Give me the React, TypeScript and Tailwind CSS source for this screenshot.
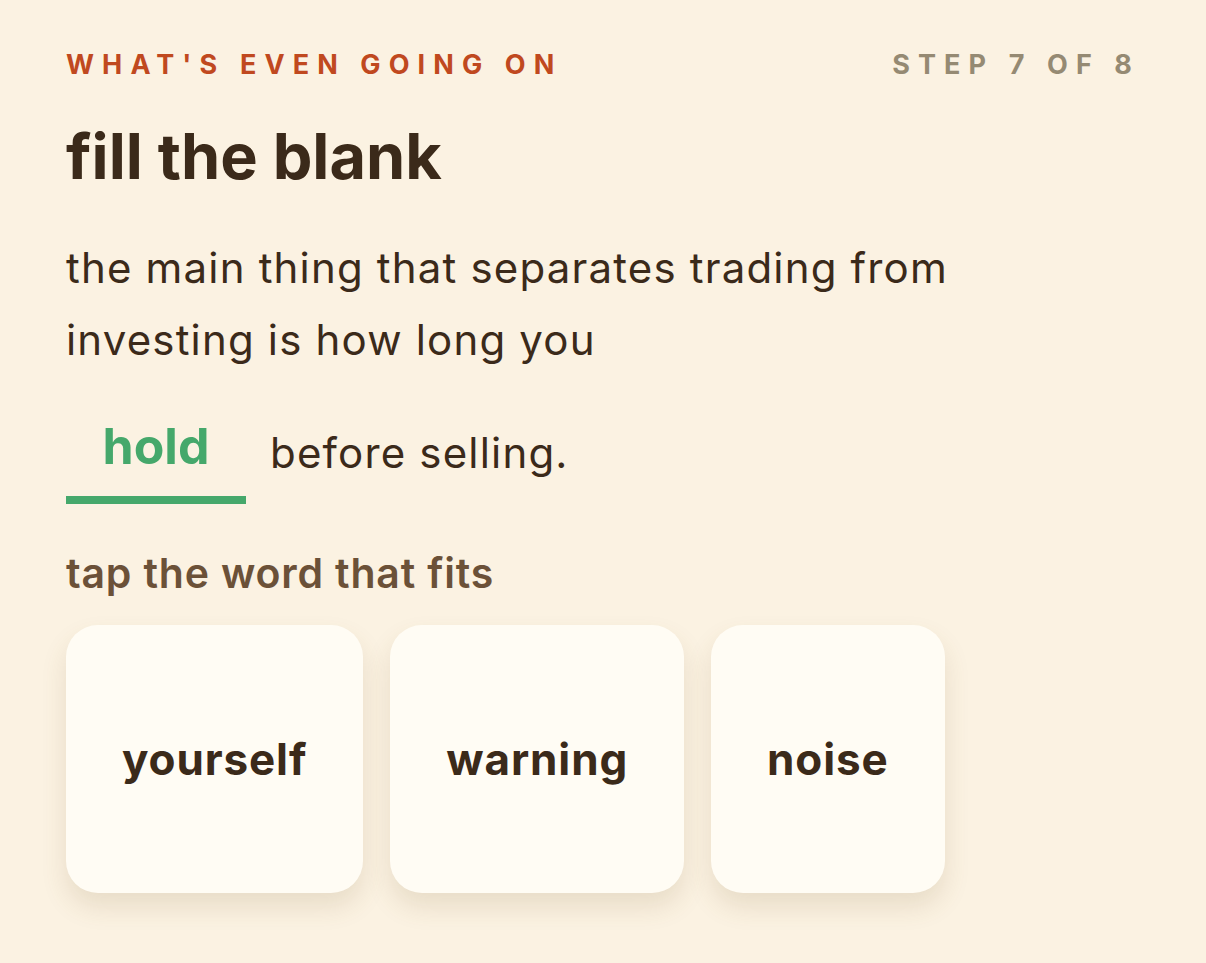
import React from "react";

export default function App() {
  const words = ["yourself", "warning", "noise"];
  return (
    <div
      className="min-h-[963px] w-full bg-[#fbf2e2] text-[#3b2a1a]"
      style={{ fontFamily: "Inter, 'Noto Sans', sans-serif" }}
    >
      <div className="px-[66px] pt-[48px]">
        <div className="flex items-center justify-between">
          <div className="text-[27px] font-bold tracking-[0.3em] text-[#c0491f] leading-[34px]">
            WHAT'S EVEN GOING ON
          </div>
          <div className="text-[27px] font-bold tracking-[0.3em] text-[#958a73] leading-[34px]">
            STEP 7 OF 8
          </div>
        </div>
        <h1 className="mt-[38px] text-[63px] font-bold leading-[72px] text-[#3b2a1a]">
          fill the blank
        </h1>
        <p className="mt-[40px] w-[950px] text-[42px] tracking-[0.028em] leading-[72px] text-[#3b2a1a]">
          the main thing that separates trading from investing is how long you
        </p>
        <div className="mt-[42px] flex items-start">
          <div className="flex w-[180px] flex-col items-center">
            <span className="text-[50px] font-bold leading-[56px] text-[#45a86b]">hold</span>
            <div className="mt-[22px] h-[8px] w-full bg-[#45a86b]" />
          </div>
          <span className="ml-[24px] mt-[10px] text-[42px] tracking-[0.028em] leading-[50px] text-[#3b2a1a]">
            before selling.
          </span>
        </div>
        <div className="mt-[45px] text-[41px] font-semibold tracking-[0.02em] leading-[48px] text-[#6b5138]">
          tap the word that fits
        </div>
        <div className="mt-[28px] flex gap-[27px]">
          {words.map((w) => (
            <button
              key={w}
              className="flex h-[268px] items-center justify-center rounded-[32px] bg-[#fffcf4] px-[56px] text-[44px] font-bold tracking-[0.02em] text-[#3b2a1a] shadow-[0_14px_26px_rgba(120,90,40,0.14)]"
            >
              {w}
            </button>
          ))}
        </div>
      </div>
    </div>
  );
}
